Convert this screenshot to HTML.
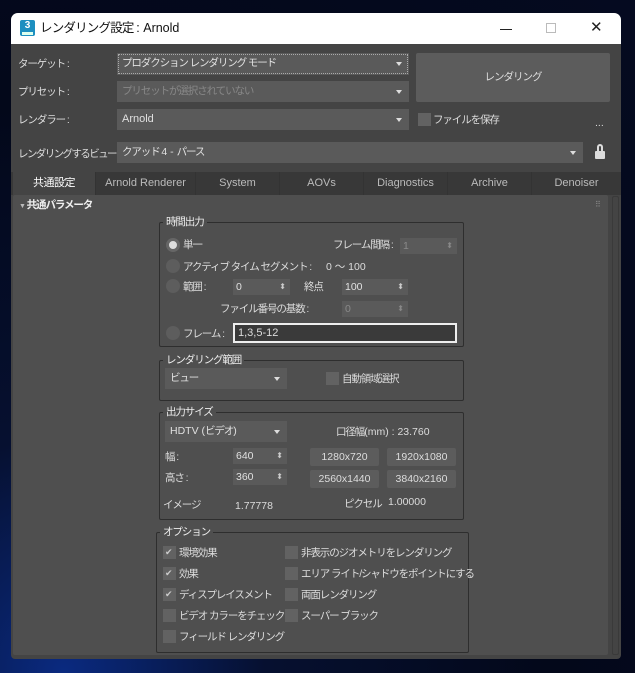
<!DOCTYPE html>
<html><head><meta charset="utf-8"><style>
*{box-sizing:border-box;margin:0;padding:0}
body{width:635px;height:673px;overflow:hidden;background:radial-gradient(ellipse at 10% 100%,#0a2a80 0%,#061030 25%,#03081a 60%,#050a20 100%);font-family:"Liberation Sans","Noto Sans CJK JP",sans-serif;font-size:10.5px;letter-spacing:-1.1px;color:#dcdcdc;position:relative}
.l,.tab,.bt,.sp{letter-spacing:0}
.a{position:absolute;white-space:nowrap;line-height:14px}
.cb{position:absolute;background:#5a5a5a;height:21px;padding:0 5px;line-height:21px;color:#e0e0e0;white-space:nowrap}
.cb:after{content:"";position:absolute;right:7px;top:9px;border:3.5px solid transparent;border-top:4px solid #ddd;border-bottom:0}
.sp{position:absolute;background:#5a5a5a;height:16px;padding:0 3px;line-height:16px;color:#e0e0e0}
.sp:after{content:"⬍";position:absolute;right:4px;top:0;font-size:8px;color:#ccc}
.dis{color:#8a8a8a}.dis:after{color:#888}
.grp{position:absolute;border:1px solid #2e2e2e;border-radius:2px}
.gl{position:absolute;background:#4f4f4f;padding:0 3px;top:-8px;left:3px;color:#eee;line-height:14px;white-space:nowrap}
.rd{position:absolute;width:14px;height:14px;border-radius:50%;background:#5d5d5d}
.ck{position:absolute;width:13px;height:13px;background:#626262}
.ck.on:after{content:"✔";position:absolute;left:2px;top:0;font-size:9px;line-height:13px;color:#ccc;letter-spacing:0}
.bt{position:absolute;background:#5c5c5c;height:18px;border-radius:2px;text-align:center;line-height:18px;color:#ddd}
.tab{position:absolute;top:172px;height:23px;line-height:23px;text-align:center;color:#bbb;border-right:1px solid #333;font-size:11px}
</style></head><body>
<div class="a" style="left:11px;top:13px;width:610px;height:646px;background:#444;border-radius:7px 7px 4px 4px"></div>
<div class="a" style="left:11px;top:13px;width:610px;height:31px;background:#fff;border-radius:7px 7px 0 0"></div>
<div class="a l" style="left:20px;top:20px;width:15px;height:16px;background:#1d8fc0;border-radius:2px;color:#fff;font-size:10px;font-weight:bold;text-align:center;line-height:11px">3<div style="position:absolute;left:2px;bottom:1px;width:11px;height:3px;background:#dfe"></div></div>
<div class="a" style="left:40px;top:21px;color:#111;font-size:12.5px;letter-spacing:-0.8px">レンダリング設定 <span class="l">: Arnold</span></div>
<div class="a" style="left:500px;top:29px;width:12px;height:1px;background:#222"></div>
<div class="a" style="left:546px;top:23px;width:10px;height:10px;border:1px solid #bbb"></div>
<div class="a" style="left:590px;top:20px;font-size:15px;line-height:16px;color:#222">✕</div>

<div class="a" style="left:18px;top:57px">ターゲット :</div>
<div class="a" style="left:18px;top:85px">プリセット :</div>
<div class="a" style="left:18px;top:113px">レンダラー :</div>
<div class="a" style="left:18px;top:147px;letter-spacing:-1.6px">レンダリングするビュー :</div>
<div class="cb" style="left:117px;top:53px;width:292px;height:22px;outline:1px dotted #aaa;outline-offset:-2px">プロダクション レンダリング モード</div>
<div class="cb" style="left:117px;top:81px;width:292px;color:#888">プリセットが選択されていない</div>
<div class="cb l" style="left:117px;top:109px;width:292px;font-size:11px">Arnold</div>
<div class="bt" style="left:416px;top:53px;width:194px;height:49px;line-height:49px;letter-spacing:-1px">レンダリング</div>
<div class="ck" style="left:418px;top:113px"></div>
<div class="a" style="left:433px;top:113px">ファイルを保存</div>
<div class="a l" style="left:595px;top:116px">...</div>
<div class="cb" style="left:117px;top:142px;width:466px">クアッド <span class="l">4 - </span>パース</div>
<div class="a" style="left:595px;top:151px;width:10px;height:8px;background:#ddd;border-radius:1px"></div>
<div class="a" style="left:597px;top:144px;width:6px;height:8px;border:2px solid #ddd;border-bottom:0;border-radius:3px 3px 0 0"></div>

<div class="a" style="left:11px;top:172px;width:610px;height:23px;background:#383838"></div>
<div class="tab" style="left:13px;width:83px;background:#444;color:#fff;letter-spacing:-0.5px">共通設定</div>
<div class="tab" style="left:96px;width:100px">Arnold Renderer</div>
<div class="tab" style="left:196px;width:84px">System</div>
<div class="tab" style="left:280px;width:84px">AOVs</div>
<div class="tab" style="left:364px;width:84px">Diagnostics</div>
<div class="tab" style="left:448px;width:84px">Archive</div>
<div class="tab" style="left:532px;width:89px;border:0">Denoiser</div>
<div class="a" style="left:13px;top:195px;width:595px;height:460px;background:#4f4f4f;border-radius:2px"></div>
<div class="a" style="left:612px;top:196px;width:7px;height:459px;background:#444;border:1px solid #3a3a3a;border-radius:2px"></div>
<div class="a" style="left:19px;top:198px;font-weight:bold;color:#eee"><span style="font-size:7px;color:#bbb">▼</span> 共通パラメータ</div>
<div class="a" style="left:595px;top:198px;font-size:8px;color:#888">⠿</div>

<div class="grp" style="left:159px;top:222px;width:305px;height:125px"><div class="gl">時間出力</div></div>
<div class="rd" style="left:166px;top:238px;background:#ddd;border:3px solid #666"></div><div class="a" style="left:183px;top:238px">単一</div>
<div class="a" style="left:333px;top:238px">フレーム間隔 :</div><div class="sp dis" style="left:400px;top:238px;width:57px">1</div>
<div class="rd" style="left:166px;top:259px"></div><div class="a" style="left:183px;top:260px">アクティブ タイム セグメント :</div><div class="a l" style="left:326px;top:260px">0 〜 100</div>
<div class="rd" style="left:166px;top:279px"></div><div class="a" style="left:183px;top:280px">範囲 :</div>
<div class="sp" style="left:233px;top:279px;width:57px">0</div><div class="a" style="left:304px;top:280px">終点</div>
<div class="sp" style="left:342px;top:279px;width:66px">100</div>
<div class="a" style="left:220px;top:302px">ファイル番号の基数 :</div><div class="sp dis" style="left:342px;top:301px;width:66px">0</div>
<div class="rd" style="left:166px;top:326px"></div><div class="a" style="left:183px;top:327px">フレーム :</div>
<div class="a l" style="left:233px;top:323px;width:224px;height:20px;background:#3a3a3a;border:2px solid #eee;padding:0 3px;line-height:16px;font-size:11px">1,3,5-12</div>

<div class="grp" style="left:159px;top:360px;width:305px;height:41px"><div class="gl">レンダリング範囲</div></div>
<div class="cb" style="left:165px;top:368px;width:122px">ビュー</div>
<div class="ck" style="left:326px;top:372px"></div><div class="a" style="left:342px;top:372px">自動領域選択</div>

<div class="grp" style="left:159px;top:412px;width:305px;height:108px"><div class="gl">出力サイズ</div></div>
<div class="cb" style="left:165px;top:421px;width:122px"><span class="l">HDTV (</span>ビデオ<span class="l">)</span></div>
<div class="a" style="left:336px;top:425px">口径幅<span class="l">(mm) : 23.760</span></div>
<div class="a" style="left:165px;top:450px">幅 :</div><div class="sp" style="left:233px;top:448px;width:54px">640</div>
<div class="a" style="left:165px;top:471px">高さ :</div><div class="sp" style="left:233px;top:469px;width:54px">360</div>
<div class="bt" style="left:310px;top:448px;width:69px">1280x720</div>
<div class="bt" style="left:387px;top:448px;width:69px">1920x1080</div>
<div class="bt" style="left:310px;top:470px;width:69px">2560x1440</div>
<div class="bt" style="left:387px;top:470px;width:69px">3840x2160</div>
<div class="a" style="left:163px;top:498px">イメージ</div><div class="a l" style="left:235px;top:499px">1.77778</div>
<div class="a" style="left:344px;top:497px">ピクセル</div><div class="a l" style="left:388px;top:495px">1.00000</div>

<div class="grp" style="left:156px;top:532px;width:313px;height:121px"><div class="gl">オプション</div></div>
<div class="ck on" style="left:163px;top:546px"></div><div class="a" style="left:179px;top:546px">環境効果</div>
<div class="ck on" style="left:163px;top:567px"></div><div class="a" style="left:179px;top:567px">効果</div>
<div class="ck on" style="left:163px;top:588px"></div><div class="a" style="left:179px;top:588px">ディスプレイスメント</div>
<div class="ck" style="left:163px;top:609px"></div><div class="a" style="left:179px;top:609px">ビデオ カラーをチェック</div>
<div class="ck" style="left:163px;top:630px"></div><div class="a" style="left:179px;top:630px">フィールド レンダリング</div>
<div class="ck" style="left:285px;top:546px"></div><div class="a" style="left:301px;top:546px">非表示のジオメトリをレンダリング</div>
<div class="ck" style="left:285px;top:567px"></div><div class="a" style="left:301px;top:567px">エリア ライト/シャドウをポイントにする</div>
<div class="ck" style="left:285px;top:588px"></div><div class="a" style="left:301px;top:588px">両面レンダリング</div>
<div class="ck" style="left:285px;top:609px"></div><div class="a" style="left:301px;top:609px">スーパー ブラック</div>
</body></html>
